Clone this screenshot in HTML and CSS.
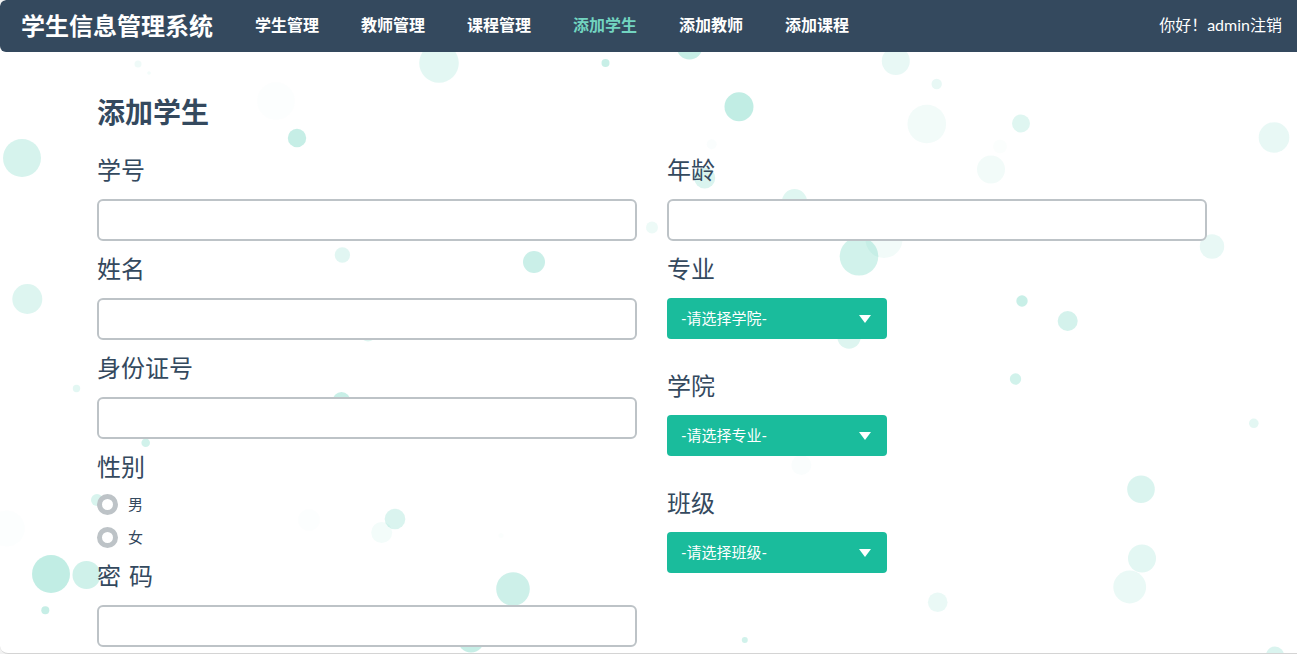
FILE: index.html
```html
<!DOCTYPE html>
<html lang="zh-CN">
<head>
<meta charset="utf-8">
<title>学生信息管理系统</title>
<link rel="stylesheet" href="styles.css">
</head>
<body>
<div class="panel">
  <svg class="bubbles" viewBox="0 0 1297 654" preserveAspectRatio="xMidYMin slice" aria-hidden="true">
    <circle cx="22" cy="158" r="19" opacity=".18"/>
    <circle cx="138" cy="64" r="3.5" opacity=".07"/>
    <circle cx="149" cy="73" r="1.8" opacity=".05"/>
    <circle cx="276" cy="101" r="19" opacity=".012"/>
    <circle cx="297" cy="138" r="9.2" opacity=".25"/>
    <circle cx="439" cy="63" r="19.8" opacity=".12"/>
    <circle cx="605.5" cy="63" r="4" opacity=".24"/>
    <circle cx="689.5" cy="46.5" r="13" opacity=".25"/>
    <circle cx="739" cy="106.7" r="14.5" opacity=".27"/>
    <circle cx="711.7" cy="144.3" r="5" opacity=".025"/>
    <circle cx="704.7" cy="178" r="10.5" opacity=".16"/>
    <circle cx="794.5" cy="201.5" r="12.5" opacity=".14"/>
    <circle cx="895.8" cy="61" r="14" opacity=".1"/>
    <circle cx="936.7" cy="84" r="5.2" opacity=".1"/>
    <circle cx="926.8" cy="124" r="19.3" opacity=".06"/>
    <circle cx="1021" cy="123.5" r="9" opacity=".14"/>
    <circle cx="1000" cy="146.5" r="7" opacity=".015"/>
    <circle cx="991" cy="169.5" r="14" opacity=".06"/>
    <circle cx="1274" cy="137.5" r="15.3" opacity=".1"/>
    <circle cx="342.4" cy="255" r="7.7" opacity=".13"/>
    <circle cx="27.3" cy="299" r="15" opacity=".15"/>
    <circle cx="368" cy="333" r="8.5" opacity=".15"/>
    <circle cx="76.5" cy="388.5" r="3.7" opacity=".12"/>
    <circle cx="341.5" cy="401" r="9" opacity=".24"/>
    <circle cx="534" cy="262" r="11" opacity=".23"/>
    <circle cx="652" cy="227.5" r="6" opacity=".08"/>
    <circle cx="884" cy="239.5" r="18.5" opacity=".06"/>
    <circle cx="859" cy="256.3" r="19.3" opacity=".2"/>
    <circle cx="849" cy="337" r="11.7" opacity=".15"/>
    <circle cx="1212" cy="246.5" r="12.2" opacity=".1"/>
    <circle cx="1022" cy="301" r="5.7" opacity=".24"/>
    <circle cx="1067.7" cy="321" r="10" opacity=".19"/>
    <circle cx="1015.5" cy="379" r="5.7" opacity=".2"/>
    <circle cx="1253.8" cy="423.3" r="4.8" opacity=".12"/>
    <circle cx="145.7" cy="442.7" r="4.3" opacity=".2"/>
    <circle cx="97" cy="500" r="6" opacity=".17"/>
    <circle cx="7" cy="528.5" r="18" opacity=".012"/>
    <circle cx="309" cy="520" r="11" opacity=".012"/>
    <circle cx="395" cy="519" r="10.3" opacity=".16"/>
    <circle cx="381.7" cy="532.5" r="10.5" opacity=".05"/>
    <circle cx="51" cy="574" r="19" opacity=".27"/>
    <circle cx="86.5" cy="575" r="14" opacity=".21"/>
    <circle cx="45.3" cy="610.3" r="4" opacity=".25"/>
    <circle cx="801.3" cy="465" r="10" opacity=".025"/>
    <circle cx="501" cy="535.5" r="2.5" opacity=".015"/>
    <circle cx="513" cy="589" r="16.8" opacity=".22"/>
    <circle cx="744.8" cy="640" r="3" opacity=".2"/>
    <circle cx="471" cy="639" r="13.5" opacity=".25"/>
    <circle cx="1141" cy="489.3" r="13.8" opacity=".16"/>
    <circle cx="1142" cy="558.5" r="14" opacity=".12"/>
    <circle cx="1129.7" cy="587" r="16.4" opacity=".09"/>
    <circle cx="937.7" cy="602.3" r="9.8" opacity=".09"/>
    <circle cx="1275" cy="655.5" r="9" opacity=".16"/>
  </svg>

  <header class="navbar">
    <a class="brand" href="#">学生信息管理系统</a>
    <nav class="nav">
      <a href="#">学生管理</a>
      <a href="#">教师管理</a>
      <a href="#">课程管理</a>
      <a class="active" href="#" aria-current="page">添加学生</a>
      <a href="#">添加教师</a>
      <a href="#">添加课程</a>
    </nav>
    <div class="account">你好！admin<a href="#">注销</a></div>
  </header>

  <main class="content">
    <h1>添加学生</h1>
    <form class="form">
      <div class="column">
        <div class="field">
          <label class="field-label" for="number">学号</label>
          <input class="text-input" id="number" type="text">
        </div>
        <div class="field">
          <label class="field-label" for="name">姓名</label>
          <input class="text-input" id="name" type="text">
        </div>
        <div class="field">
          <label class="field-label" for="idcard">身份证号</label>
          <input class="text-input" id="idcard" type="text">
        </div>
        <div class="field field-radio" role="radiogroup" aria-labelledby="gender">
          <span class="field-label" id="gender">性别</span>
          <div class="radios">
            <label class="radio"><input type="radio" name="gender" value="male">男</label>
            <label class="radio"><input type="radio" name="gender" value="female">女</label>
          </div>
        </div>
        <div class="field">
          <label class="field-label" for="password">密&#x2004;码</label>
          <input class="text-input" id="password" type="password">
        </div>
      </div>
      <div class="column">
        <div class="field">
          <label class="field-label" for="age">年龄</label>
          <input class="text-input" id="age" type="text">
        </div>
        <div class="field field-select">
          <label class="field-label" for="major">专业</label>
          <div class="select"><select id="major"><option>-请选择学院-</option></select></div>
        </div>
        <div class="field field-select">
          <label class="field-label" for="college">学院</label>
          <div class="select"><select id="college"><option>-请选择专业-</option></select></div>
        </div>
        <div class="field field-select">
          <label class="field-label" for="class">班级</label>
          <div class="select"><select id="class"><option>-请选择班级-</option></select></div>
        </div>
      </div>
    </form>
  </main>
</div>
</body>
</html>
```
FILE: styles.css
```css
* {
  box-sizing: border-box;
}

body {
  margin: 0;
  background: #f2f2f2;
  color: #34495e;
  font-family: Lato, "Noto Sans CJK SC", sans-serif;
  font-size: 15px;
}

.panel {
  position: relative;
  overflow: hidden;
  min-height: 100vh;
  background: #fff;
  border-bottom: 1px solid #d4d4d4;
  border-radius: 6px 0 0 8px;
}

.bubbles {
  position: absolute;
  inset: 0;
  width: 100%;
  height: 100%;
  fill: #1abc9c;
}

.navbar {
  position: relative;
  display: flex;
  align-items: center;
  height: 52px;
  padding: 0 15px 4px 21px;
  background: #34495e;
  border-radius: 6px 0 0 6px;
  color: #fff;
  font-size: 16px;
}

.navbar a {
  color: inherit;
  text-decoration: none;
}

.navbar .brand {
  font-size: 24px;
  font-weight: 700;
}

.nav {
  display: flex;
  gap: 42px;
  margin-left: 42px;
  font-weight: 700;
}

.nav .active,
.navbar .active {
  color: #72d4c0;
}

.account {
  margin-left: auto;
}

.content {
  position: relative;
  padding: 40px 90px 6px 97px;
}

h1 {
  margin: 0 0 21px;
  font-size: 28px;
  font-weight: 700;
  line-height: 40px;
}

.form {
  display: grid;
  grid-template-columns: 1fr 1fr;
  gap: 30px;
}

.column {
  display: flex;
  flex-direction: column;
  gap: 11px;
}

.field-label {
  display: block;
  margin-bottom: 12px;
  font-size: 24px;
  line-height: 34px;
}

.field-radio .field-label {
  margin-bottom: 10px;
}

.text-input {
  display: block;
  width: 100%;
  height: 42px;
  padding: 8px 12px;
  background: #fff;
  border: 2px solid #bdc3c7;
  border-radius: 6px;
  color: inherit;
  font: inherit;
}

.radios {
  display: flex;
  flex-direction: column;
  gap: 12px;
}

.radio {
  display: flex;
  align-items: center;
  gap: 10px;
  line-height: 21px;
}

.radio input {
  appearance: none;
  width: 21px;
  height: 21px;
  margin: 0;
  background: #fff;
  border: 5px solid #bdc3c7;
  border-radius: 50%;
}

.radio input:checked {
  border-color: #1abc9c;
}

.field-select {
  margin-bottom: 19px;
}

.select {
  position: relative;
  width: 220px;
}

.select::after {
  content: "";
  position: absolute;
  top: 17px;
  right: 16px;
  border: 6px solid transparent;
  border-top: 8px solid #fff;
  border-bottom: 0;
  pointer-events: none;
}

.select select {
  appearance: none;
  display: block;
  width: 100%;
  height: 41px;
  padding: 0 40px 2px 14px;
  background: #1abc9c;
  border: 0;
  border-radius: 4px;
  color: #fff;
  font: inherit;
}
```
